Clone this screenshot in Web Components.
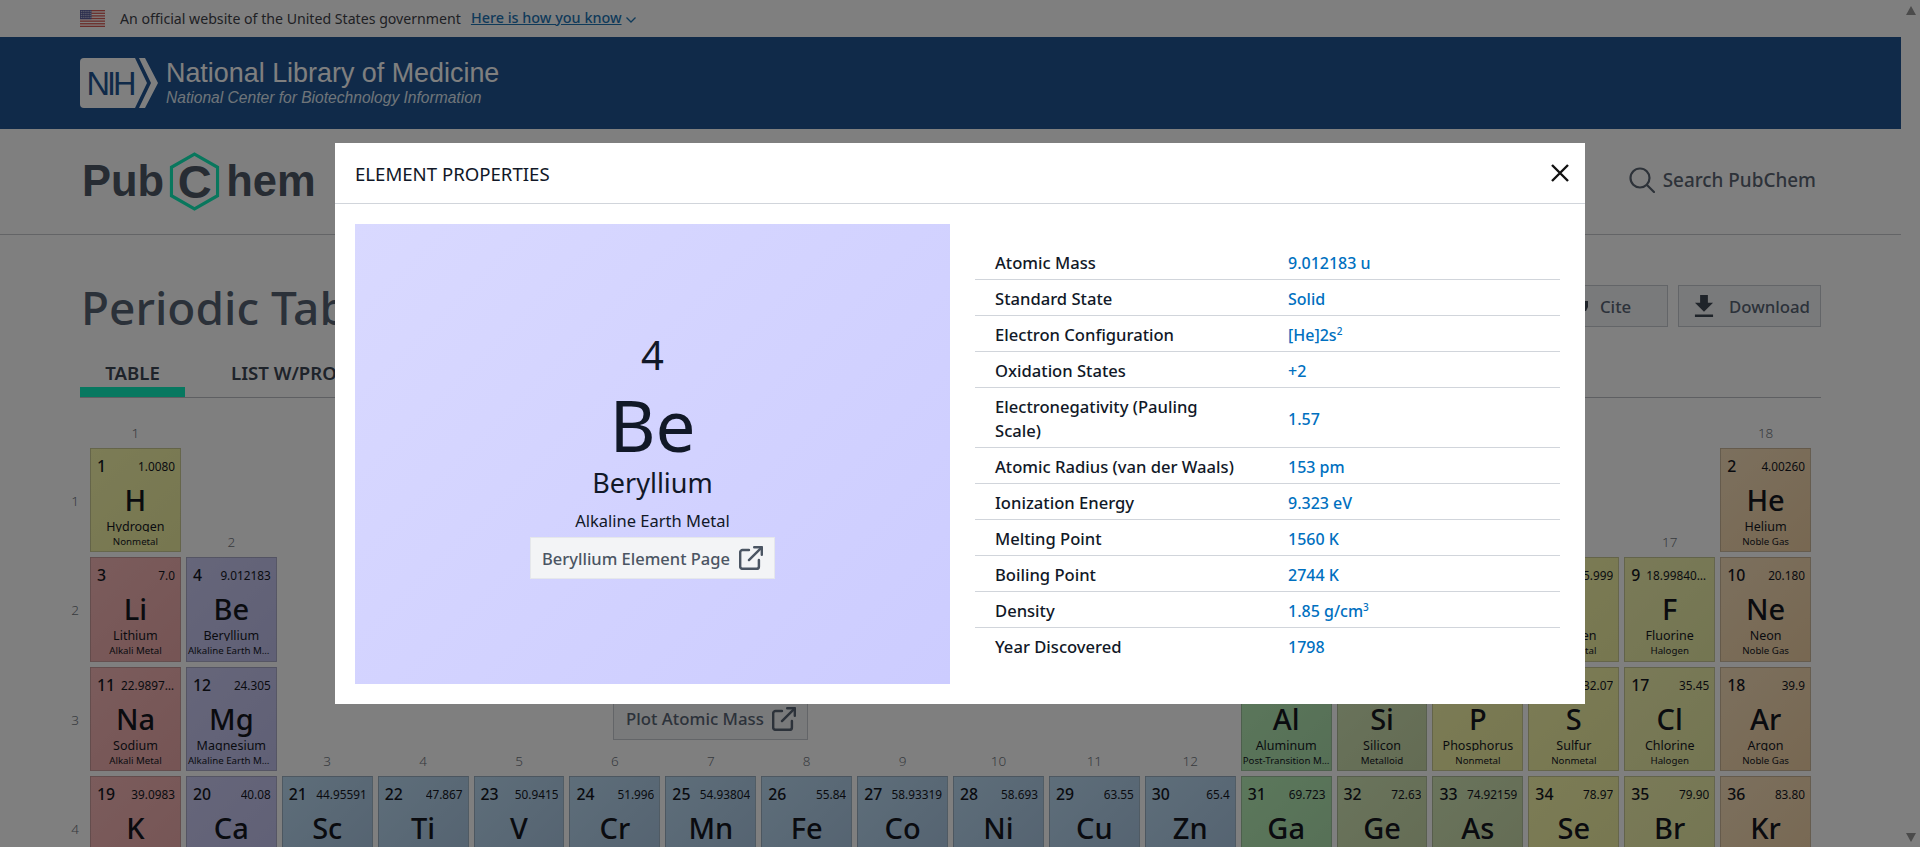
<!DOCTYPE html>
<html lang="en">
<head>
<meta charset="UTF-8">
<title>Periodic Table - PubChem</title>
<style>
html, body { margin: 0; height: 847px; overflow: hidden; background: #fff; font-family: "Noto Sans", sans-serif; }
#page { display: flex; height: 847px; }
#main { width: 1901px; flex: none; overflow: hidden; }
</style>
</head>
<body>
<div id="page">
  <div id="main">
    <gov-banner></gov-banner>
    <nih-header></nih-header>
    <pc-header></pc-header>
    <title-row></title-row>
    <tab-bar></tab-bar>
    <periodic-grid></periodic-grid>
  </div>
  <scroll-strip></scroll-strip>
</div>
<element-modal></element-modal>

<script>
const EXT_ICON = `<svg viewBox="2 1.5 20.5 20.5" width="24" height="24" fill="none" stroke="currentColor" stroke-width="2.1" stroke-linecap="round" stroke-linejoin="round"><path d="M19 13.5V19a2 2 0 0 1-2 2H5a2 2 0 0 1-2-2V7a2 2 0 0 1 2-2h5.5"/><path d="M15 2.5h6.5V9"/><path d="M10.5 13.5L21 3"/></svg>`;

function define(name, css, html) {
  customElements.define(name, class extends HTMLElement {
    constructor() {
      super();
      this.attachShadow({ mode: 'open' }).innerHTML = `<style>${css}</style>${html}`;
    }
  });
}

const stripes = [0,2,4,6,8,10,12].map(i => `<rect x="0" y="${i * 1.31}" width="25" height="1.31" fill="#d65a55"/>`).join('');
const stars = [];
for (let r = 0; r < 4; r++) for (let c = 0; c < 6; c++) stars.push(`<circle cx="${1.3 + c * 1.9}" cy="${1.3 + r * 2}" r=".5" fill="#fff"/>`);

define('gov-banner', `
  :host { display: flex; align-items: center; height: 37px; padding-left: 80px; font-size: 14.15px; color: #3e4249; box-sizing: border-box; }
  svg { margin-right: 15px; }
  a { color: #1e74b4; text-decoration: underline; margin-left: 10px; font-weight: 500; font-size: 14.4px; margin-top: -2px; }
  .chev { margin: 3px 0 0 3px; }
`, `<svg width="25" height="17" viewBox="0 0 25 17"><rect width="25" height="17" fill="#fff"/>${stripes}<rect width="11.5" height="9.2" fill="#5a5f9e"/>${stars.join('')}</svg>
  <span>An official website of the United States government</span><a>Here is how you know</a>
  <svg class="chev" width="12" height="8" viewBox="0 0 12 8" fill="none" stroke="#1e74b4" stroke-width="1.3"><path d="M1.5 1.5L6 6l4.5-4.5"/></svg>`);

define('nih-header', `
  :host { display: flex; align-items: center; height: 92px; padding-left: 80px; background: #205493; color: #fff; font-family: "Liberation Sans", Arial, sans-serif; }
  .txt { margin-left: 8px; display: flex; flex-direction: column; margin-top: -2px; }
  .a { font-size: 26.9px; line-height: 32px; }
  .b { font-size: 15.6px; line-height: 18px; font-style: italic; color: #dfe8f2; margin-top: 0; }
`, `<svg width="78" height="50" viewBox="0 0 78 50"><path d="M4 0H55L67 25L55 50H4a4 4 0 0 1-4-4V4a4 4 0 0 1 4-4z" fill="#fff"/><path d="M59 0H65L78 25L65 50H59L71 25z" fill="#fff"/><text x="6.5" y="37" font-family="Liberation Sans" font-size="32.5" fill="#205493" textLength="50">NIH</text></svg>
  <div class="txt"><span class="a">National Library of Medicine</span><span class="b">National Center for Biotechnology Information</span></div>`);

define('pc-header', `
  :host { display: flex; align-items: center; justify-content: space-between; height: 105px; box-sizing: content-box; padding: 0 85px 0 82px; border-bottom: 1px solid #c6c8cc; }
  .logo { display: flex; align-items: center; font: bold 43.5px/1 "Liberation Sans", Arial, sans-serif; color: #4f5966; }
  .hex { position: relative; width: 51px; height: 59px; display: flex; align-items: center; justify-content: center; margin: 0 6px 0 5px; font-size: 47px; }
  .hex svg { position: absolute; inset: 0; }
  .search { display: flex; align-items: center; gap: 8px; font-size: 18.9px; font-weight: 500; color: #5b6572; margin-bottom: 3px; }
`, `<div class="logo"><span>Pub</span><span class="hex"><svg width="51" height="59" viewBox="0 0 52 60" fill="none" stroke="#12eebb" stroke-width="3.2"><path d="M26 2L49.5 15.5V44.5L26 58L2.5 44.5V15.5z"/></svg><span>C</span></span><span>hem</span></div>
  <div class="search"><svg width="26" height="26" viewBox="0 0 26 26" fill="none" stroke="#5b6572" stroke-width="2.2" stroke-linecap="round"><circle cx="11" cy="11" r="9.5"/><path d="M18 18l7 7"/></svg><span>Search PubChem</span></div>`);

define('title-row', `
  :host { display: flex; align-items: center; justify-content: space-between; height: 42px; margin-top: 50px; padding: 0 80px; }
  h1 { margin: 2px 0 0 1px; font-size: 46px; font-weight: 500; color: #566373; white-space: nowrap; }
  .btns { display: flex; gap: 10px; }
  .btn { display: flex; align-items: center; height: 42px; box-sizing: border-box; border: 1px solid #c6cad0; background: #f3f4f6; color: #586474; font-size: 16.8px; font-weight: 500; padding: 0 10px 0 15px; gap: 15px; }
`, `<h1>Periodic Table</h1>
  <div class="btns">
    <div class="btn" style="width:108px;padding-left:12px;gap:11px"><svg width="16" height="16" viewBox="4 5 16 14" fill="#3f4854"><path d="M6 17h3l2-4V7H5v6h3zm8 0h3l2-4V7h-6v6h3z"/></svg><span>Cite</span></div>
    <div class="btn"><svg width="20" height="22" viewBox="5 3 14 17" fill="#3f4854"><path d="M19 9h-4V3H9v6H5l7 7 7-7zM5 18v2h14v-2H5z"/></svg><span>Download</span></div>
  </div>`);

define('tab-bar', `
  :host { display: flex; gap: 21px; height: 46px; margin: 24px 80px 0; border-bottom: 1px solid #bcbfc4; box-sizing: content-box; }
  .tab { display: flex; align-items: center; justify-content: center; height: 30px; padding: 6px 25px 0; font-size: 18.6px; font-weight: 600; color: #3c4654; box-sizing: content-box; white-space: nowrap; }
  .tab.on { width: 55px; border-bottom: 10px solid #0ef0c0; }
`, `<div class="tab on">TABLE</div><div class="tab">LIST W/PROPERTIES</div><div class="tab">TRENDS</div>`);

define('scroll-strip', `
  :host { display: flex; flex-direction: column; justify-content: space-between; align-items: center; width: 19px; flex: none; background: #ffffff; padding: 6px 0 5px; box-sizing: border-box; }
  i { width: 0; height: 0; border-left: 5.5px solid transparent; border-right: 5.5px solid transparent; }
  .u { border-bottom: 9px solid #969696; }
  .d { border-top: 9px solid #969696; }
`, `<i class="u"></i><i class="d"></i>`);

const COLORS = {
  nonmetal: ['#f8f8ac', '#eeeea0'], noble: ['#f8e0bc', '#f0d0a4'], alkali: ['#f6b8b8', '#ecaaaa'], alkaline: ['#ccccf4', '#c0c0ec'],
  transition: ['#bcdcf4', '#a8c4e0'], post: ['#b8f0b8', '#acdeac'], metalloid: ['#d4e8b8', '#c8d8a8'], halogen: ['#f4f4b0', '#e8eca4']
};
const CAT = { nonmetal: 'Nonmetal', noble: 'Noble Gas', alkali: 'Alkali Metal', alkaline: 'Alkaline Earth Metal', transition: 'Transition Metal', post: 'Post-Transition Metal', metalloid: 'Metalloid', halogen: 'Halogen' };

class PtCell extends HTMLElement {
  connectedCallback() {
    const [a, b] = COLORS[this.dataset.cat];
    const root = this.attachShadow({ mode: 'open' });
    root.innerHTML = `<style>
      :host { display: block; min-width: 0; box-sizing: border-box; border: 1px solid rgba(110,110,110,.3); background: linear-gradient(135deg, ${a}, ${b}); color: #14171f; text-align: center; overflow: hidden; }
      .top { display: flex; justify-content: space-between; align-items: center; height: 20px; margin: 7px 5px 0 6px; gap: 6px; }
      .n { font-size: 15.8px; font-weight: 500; flex: none; }
      .m { font-size: 11.8px; min-width: 0; overflow: hidden; white-space: nowrap; text-overflow: ellipsis; }
      .s { font-size: 29px; line-height: 38px; margin-top: 5px; font-weight: 500; }
      .name { font-size: 12.5px; line-height: 15px; height: 13px; overflow: hidden; margin-top: 0; }
      .cat { font-size: 9.7px; line-height: 13px; margin-top: 3px; padding: 0 1px; overflow: hidden; white-space: nowrap; text-overflow: ellipsis; }
    </style>
    <div class="top"><span class="n">${this.dataset.n}</span><span class="m">${this.dataset.m}</span></div>
    <div class="s">${this.dataset.s}</div>
    <div class="name">${this.dataset.name}</div>
    <div class="cat">${CAT[this.dataset.cat]}</div>`;
  }
}
customElements.define('pt-cell', PtCell);

const ELEMENTS = [
  [1,1,1,'H','Hydrogen','1.0080','nonmetal'],[2,1,18,'He','Helium','4.00260','noble'],
  [3,2,1,'Li','Lithium','7.0','alkali'],[4,2,2,'Be','Beryllium','9.012183','alkaline'],
  [5,2,13,'B','Boron','10.81','metalloid'],[6,2,14,'C','Carbon','12.011','nonmetal'],[7,2,15,'N','Nitrogen','14.007','nonmetal'],[8,2,16,'O','Oxygen','15.999','nonmetal'],
  [9,2,17,'F','Fluorine','18.998403162','halogen'],[10,2,18,'Ne','Neon','20.180','noble'],
  [11,3,1,'Na','Sodium','22.98976928','alkali'],[12,3,2,'Mg','Magnesium','24.305','alkaline'],
  [13,3,13,'Al','Aluminum','26.981538','post'],[14,3,14,'Si','Silicon','28.085','metalloid'],[15,3,15,'P','Phosphorus','30.973762','nonmetal'],[16,3,16,'S','Sulfur','32.07','nonmetal'],
  [17,3,17,'Cl','Chlorine','35.45','halogen'],[18,3,18,'Ar','Argon','39.9','noble'],
  [19,4,1,'K','Potassium','39.0983','alkali'],[20,4,2,'Ca','Calcium','40.08','alkaline'],[21,4,3,'Sc','Scandium','44.95591','transition'],[22,4,4,'Ti','Titanium','47.867','transition'],
  [23,4,5,'V','Vanadium','50.9415','transition'],[24,4,6,'Cr','Chromium','51.996','transition'],[25,4,7,'Mn','Manganese','54.93804','transition'],[26,4,8,'Fe','Iron','55.84','transition'],
  [27,4,9,'Co','Cobalt','58.93319','transition'],[28,4,10,'Ni','Nickel','58.693','transition'],[29,4,11,'Cu','Copper','63.55','transition'],[30,4,12,'Zn','Zinc','65.4','transition'],
  [31,4,13,'Ga','Gallium','69.723','post'],[32,4,14,'Ge','Germanium','72.63','metalloid'],[33,4,15,'As','Arsenic','74.92159','metalloid'],[34,4,16,'Se','Selenium','78.97','nonmetal'],
  [35,4,17,'Br','Bromine','79.90','halogen'],[36,4,18,'Kr','Krypton','83.80','noble']
];

class PeriodicGrid extends HTMLElement {
  connectedCallback() {
    const root = this.attachShadow({ mode: 'open' });
    const groupRow = g => (g === 1 || g === 18) ? 1 : (g === 2 || g >= 13) ? 2 : 4;
    let html = '';
    for (let g = 1; g <= 18; g++) html += `<div class="g" style="grid-column:${g + 1};grid-row:${groupRow(g)}">${g}</div>`;
    for (let p = 1; p <= 4; p++) html += `<div class="p" style="grid-row:${p + 1}">${p}</div>`;
    for (const [n, p, g, s, name, m, cat] of ELEMENTS) {
      html += `<pt-cell style="grid-column:${g + 1};grid-row:${p + 1}" data-n="${n}" data-s="${s}" data-name="${name}" data-m="${m}" data-cat="${cat}"></pt-cell>`;
    }
    root.innerHTML = `<style>
      :host { display: grid; grid-template-columns: 20px repeat(18, 90.9px); grid-template-rows: 20px repeat(7, 104.3px); gap: 5px; margin: 25px 0 0 65px; }
      .g { align-self: end; height: 20px; line-height: 20px; text-align: center; font-size: 13.5px; font-weight: 300; color: #707680; }
      .p { grid-column: 1; align-self: center; text-align: center; font-size: 13.5px; font-weight: 300; color: #707680; margin-top: 2px; }
      .sel { grid-column: 3 / 18; grid-row: 2; justify-self: end; align-self: start; width: 200px; height: 37px; box-sizing: border-box; margin: 29px 67px 0 0; border: 1px solid #c6cad0; background: #f3f4f6; display: flex; align-items: center; justify-content: flex-end; padding-right: 19px; }
      .plot { grid-column: 7 / 12; grid-row: 4; justify-self: start; align-self: start; margin: 31px 0 0 44px; height: 42px; width: 195px; box-sizing: border-box; display: flex; align-items: center; justify-content: center; gap: 8px; border: 1px solid #c6cad0; background: #f3f4f6; color: #586474; font-size: 16.8px; font-weight: 500; white-space: nowrap; }
    </style>
    ${html}
    <div class="sel"><svg width="14" height="9" viewBox="0 0 14 9" fill="none" stroke="#4b5563" stroke-width="1.5"><path d="M1.5 1.5L7 7l5.5-5.5"/></svg></div>
    <div class="plot"><span>Plot Atomic Mass</span>${EXT_ICON}</div>`;
  }
}
customElements.define('periodic-grid', PeriodicGrid);

define('prop-row', `
  :host { display: grid; grid-template-columns: 293px 1fr; align-items: center; padding: 7px 0 4px 20px; border-bottom: 1px solid #d1d5db; line-height: 24px; }
  :host(:last-child) { border-bottom: none; }
  .k { color: #111827; font-weight: 500; font-size: 16.6px; }
  .v { color: #0070c0; font-weight: 500; font-size: 16px; }
`, `<div class="k"><slot name="k"></slot></div><div class="v"><slot></slot></div>`);

define('element-modal', `
  :host { position: fixed; inset: 0; background: rgba(0,0,0,.5); display: flex; justify-content: center; align-items: flex-start; padding-top: 143px; box-sizing: border-box; }
  .box { width: 1250px; height: 561px; background: #fff; color: #111827; display: flex; flex-direction: column; }
  .hd { flex: none; height: 60px; border-bottom: 1px solid #d1d5db; display: flex; align-items: center; justify-content: space-between; padding: 0 15px 0 20px; }
  .hd span { font-size: 18.6px; color: #111827; }
  .bd { flex: 1; display: grid; grid-template-columns: 595px 585px; gap: 25px; padding: 20px 0 20px 20px; }
  .card { background: linear-gradient(135deg, #d9d9ff, #ccccff); display: flex; flex-direction: column; align-items: center; justify-content: center; text-align: center; padding-top: 7px; box-sizing: border-box; }
  .num { font-size: 40px; line-height: 37px; margin-bottom: 3px; font-weight: 400; }
  .sym { font-size: 71px; line-height: 81px; padding-top: 8px; font-weight: 400; }
  .nm { font-size: 27px; line-height: 36px; }
  .ct { font-size: 16.5px; line-height: 28px; margin-top: 6px; }
  .btn { display: flex; align-items: center; gap: 9px; width: 245px; height: 42px; box-sizing: border-box; justify-content: center; margin-top: 2px; background: #f3f4f6; border: 1px solid #e5e7eb; color: #4b5563; font-size: 16.5px; font-weight: 500; }
  .tbl { margin-top: 20px; }
`, `<div class="box">
    <div class="hd"><span>ELEMENT PROPERTIES</span><svg width="20" height="20" viewBox="0 0 20 20" stroke="#111" stroke-width="2.4"><path d="M2 2l16 16M18 2L2 18"/></svg></div>
    <div class="bd">
      <div class="card">
        <div class="num">4</div><div class="sym">Be</div><div class="nm">Beryllium</div><div class="ct">Alkaline Earth Metal</div>
        <div class="btn"><span>Beryllium Element Page</span>${EXT_ICON}</div>
      </div>
      <div class="tbl"><slot></slot></div>
    </div>
  </div>`);

// rows live in light DOM so they go through the modal's slot
const PROPS = [
  ['Atomic Mass', '9.012183 u'], ['Standard State', 'Solid'], ['Electron Configuration', '[He]2s<sup style="font-size:10px;line-height:0">2</sup>'], ['Oxidation States', '+2'],
  ['Electronegativity (Pauling<br>Scale)', '1.57'], ['Atomic Radius (van der Waals)', '153 pm'], ['Ionization Energy', '9.323 eV'], ['Melting Point', '1560 K'],
  ['Boiling Point', '2744 K'], ['Density', '1.85 g/cm<sup style="font-size:10px;line-height:0">3</sup>'], ['Year Discovered', '1798']
];
document.querySelector('element-modal').innerHTML = PROPS.map(([k, v]) => `<prop-row><span slot="k">${k}</span>${v}</prop-row>`).join('');
</script>
</body>
</html>
